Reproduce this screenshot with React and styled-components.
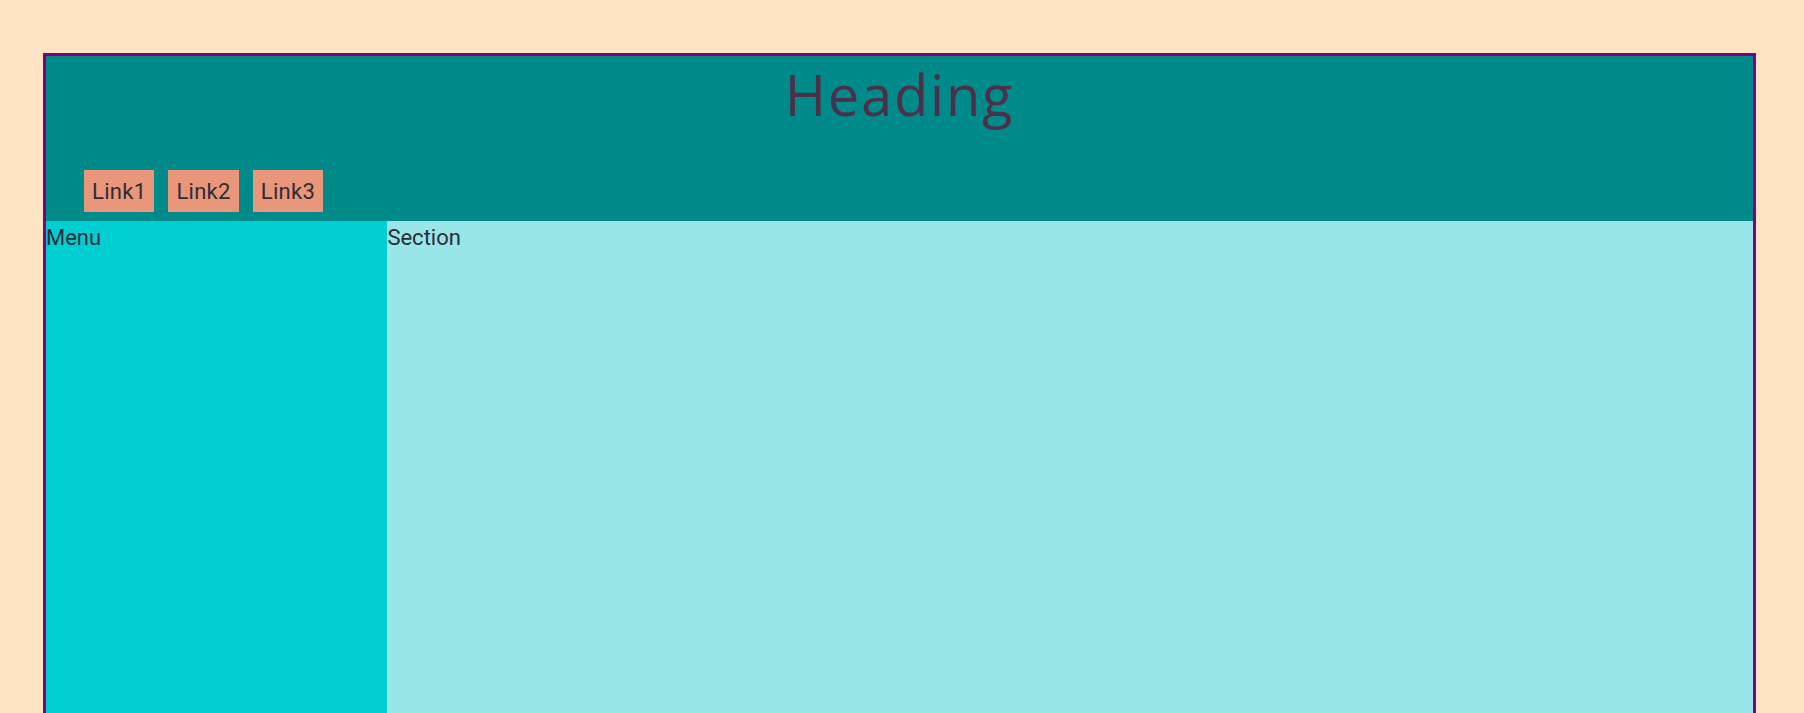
import React from 'react';
import styled, {createGlobalStyle} from 'styled-components';

const GlobalStyle = createGlobalStyle`
    html, body {
        margin: 0;
        padding: 0;
    }

    body {
        background-color: #FFE4C4;
        font-family: Roboto, "Liberation Sans", sans-serif;
        color: #2d2d3a;
    }
`;

const Page = styled.div`
    box-sizing: border-box;
    width: 1713px;
    margin: 53px 0 0 43px;
    border: 3px solid #800080;
    border-bottom: none;
`;

const Header = styled.header`
    background-color: #008B8A;
    padding-bottom: 9px;
`;

const Title = styled.h1`
    margin: 0;
    text-align: center;
    font-family: "Open Sans", "Noto Sans", sans-serif;
    font-weight: 500;
    font-size: 56px;
    line-height: 76px;
    color: #4a3049;
    letter-spacing: 1.8px;
`;

const Nav = styled.nav`
    display: flex;
    gap: 14px;
    margin-top: 38px;
    padding-left: 38px;
`;

const NavLink = styled.a`
    display: block;
    padding: 9px 8px 7px;
    background-color: #E9967A;
    color: #2d2d3a;
    font-size: 22px;
    line-height: 26px;
    letter-spacing: 0.3px;
    text-decoration: none;
`;

const Main = styled.main`
    display: grid;
    grid-template-columns: 20% 1fr;
    height: 492px;
`;

const Panel = styled.div`
    background-color: ${({$tone}) => $tone};
    font-size: 22px;
    line-height: 1.5;
`;

export default function App() {
    const links = ['Link1', 'Link2', 'Link3'];

    return (
        <>
            <GlobalStyle/>
            <Page>
                <Header>
                    <Title>Heading</Title>
                    <Nav>
                        {links.map(link => (
                            <NavLink key={link} href="#">{link}</NavLink>
                        ))}
                    </Nav>
                </Header>
                <Main>
                    <Panel $tone="#00CED1">Menu</Panel>
                    <Panel $tone="#98E6E8">Section</Panel>
                </Main>
            </Page>
        </>
    );
}
